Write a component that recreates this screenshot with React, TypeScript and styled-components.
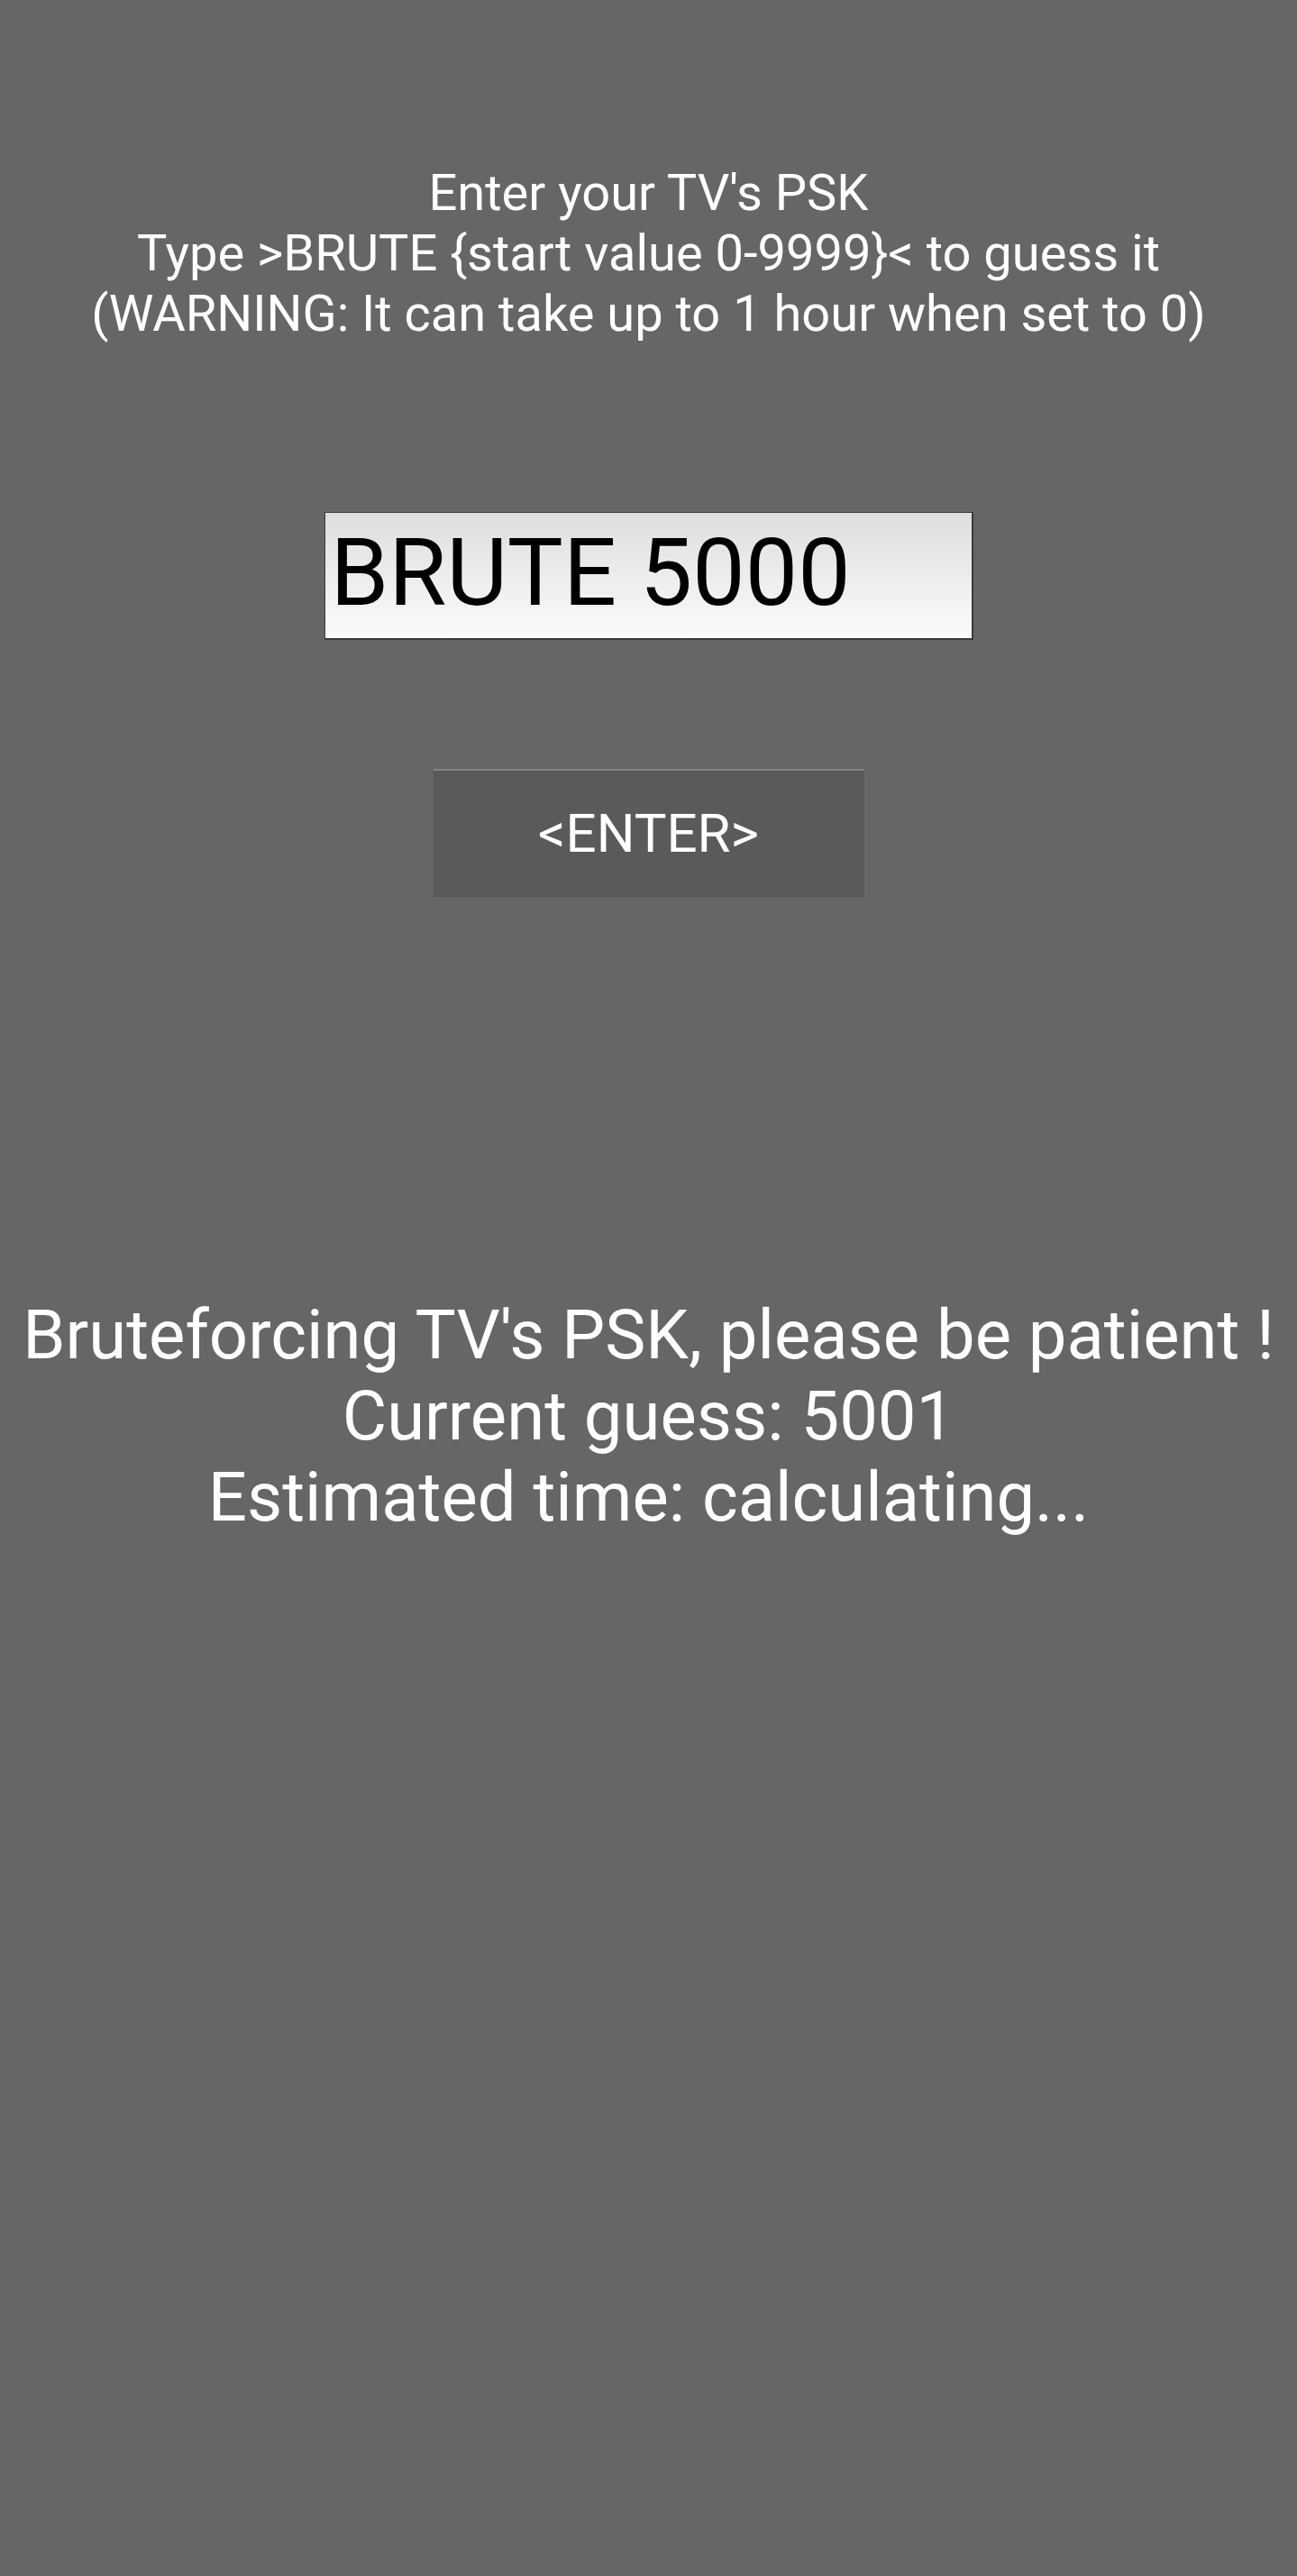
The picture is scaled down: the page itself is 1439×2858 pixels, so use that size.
import React from "react";
import styled, { createGlobalStyle } from "styled-components";

const GlobalStyle = createGlobalStyle`
  html, body {
    margin: 0;
    padding: 0;
    background: #666666;
  }
  body {
    font-family: Roboto, "Noto Sans", "Liberation Sans", sans-serif;
  }
`;

const Screen = styled.main`
  min-height: 2858px;
  background: #666666;
  display: flex;
  flex-direction: column;
  align-items: center;
  padding-top: 181px;
  box-sizing: border-box;
`;

const Prompt = styled.p`
  margin: 0;
  color: #ffffff;
  font-size: 56px;
  line-height: 67px;
  text-align: center;
  font-weight: 400;
`;

const PskField = styled.input`
  margin-top: 186px;
  width: 720px;
  height: 142px;
  box-sizing: border-box;
  border: 1px solid #3a3a3a;
  border-right-width: 2px;
  border-bottom-width: 2px;
  padding: 0 8px 6px 6px;
  background: linear-gradient(#dedede, #fbfbfb);
  color: #000000;
  font-family: Roboto, "Noto Sans", "Liberation Sans", sans-serif;
  font-size: 104px;
  outline: none;
  border-radius: 0;
`;

const EnterButton = styled.button`
  margin-top: 143px;
  width: 478px;
  height: 142px;
  box-sizing: border-box;
  background: #5a5a5a;
  border: none;
  border-top: 2px solid #858585;
  border-bottom: 2px solid #555555;
  color: #ffffff;
  font-family: Roboto, "Noto Sans", "Liberation Sans", sans-serif;
  font-size: 60px;
  padding: 0;
  cursor: pointer;
`;

const Status = styled.p`
  margin: 441px 0 0 0;
  color: #ffffff;
  font-size: 76px;
  line-height: 90px;
  text-align: center;
  font-weight: 400;
`;

export default function App() {
  return (
    <>
      <GlobalStyle />
      <Screen>
        <Prompt>
          Enter your TV's PSK
          <br />
          Type &gt;BRUTE {"{start value 0-9999}"}&lt; to guess it
          <br />
          (WARNING: It can take up to 1 hour when set to 0)
        </Prompt>
        <PskField type="text" defaultValue="BRUTE 5000" readOnly />
        <EnterButton type="button">&lt;ENTER&gt;</EnterButton>
        <Status>
          Bruteforcing TV's PSK, please be patient !
          <br />
          Current guess: 5001
          <br />
          Estimated time: calculating...
        </Status>
      </Screen>
    </>
  );
}
